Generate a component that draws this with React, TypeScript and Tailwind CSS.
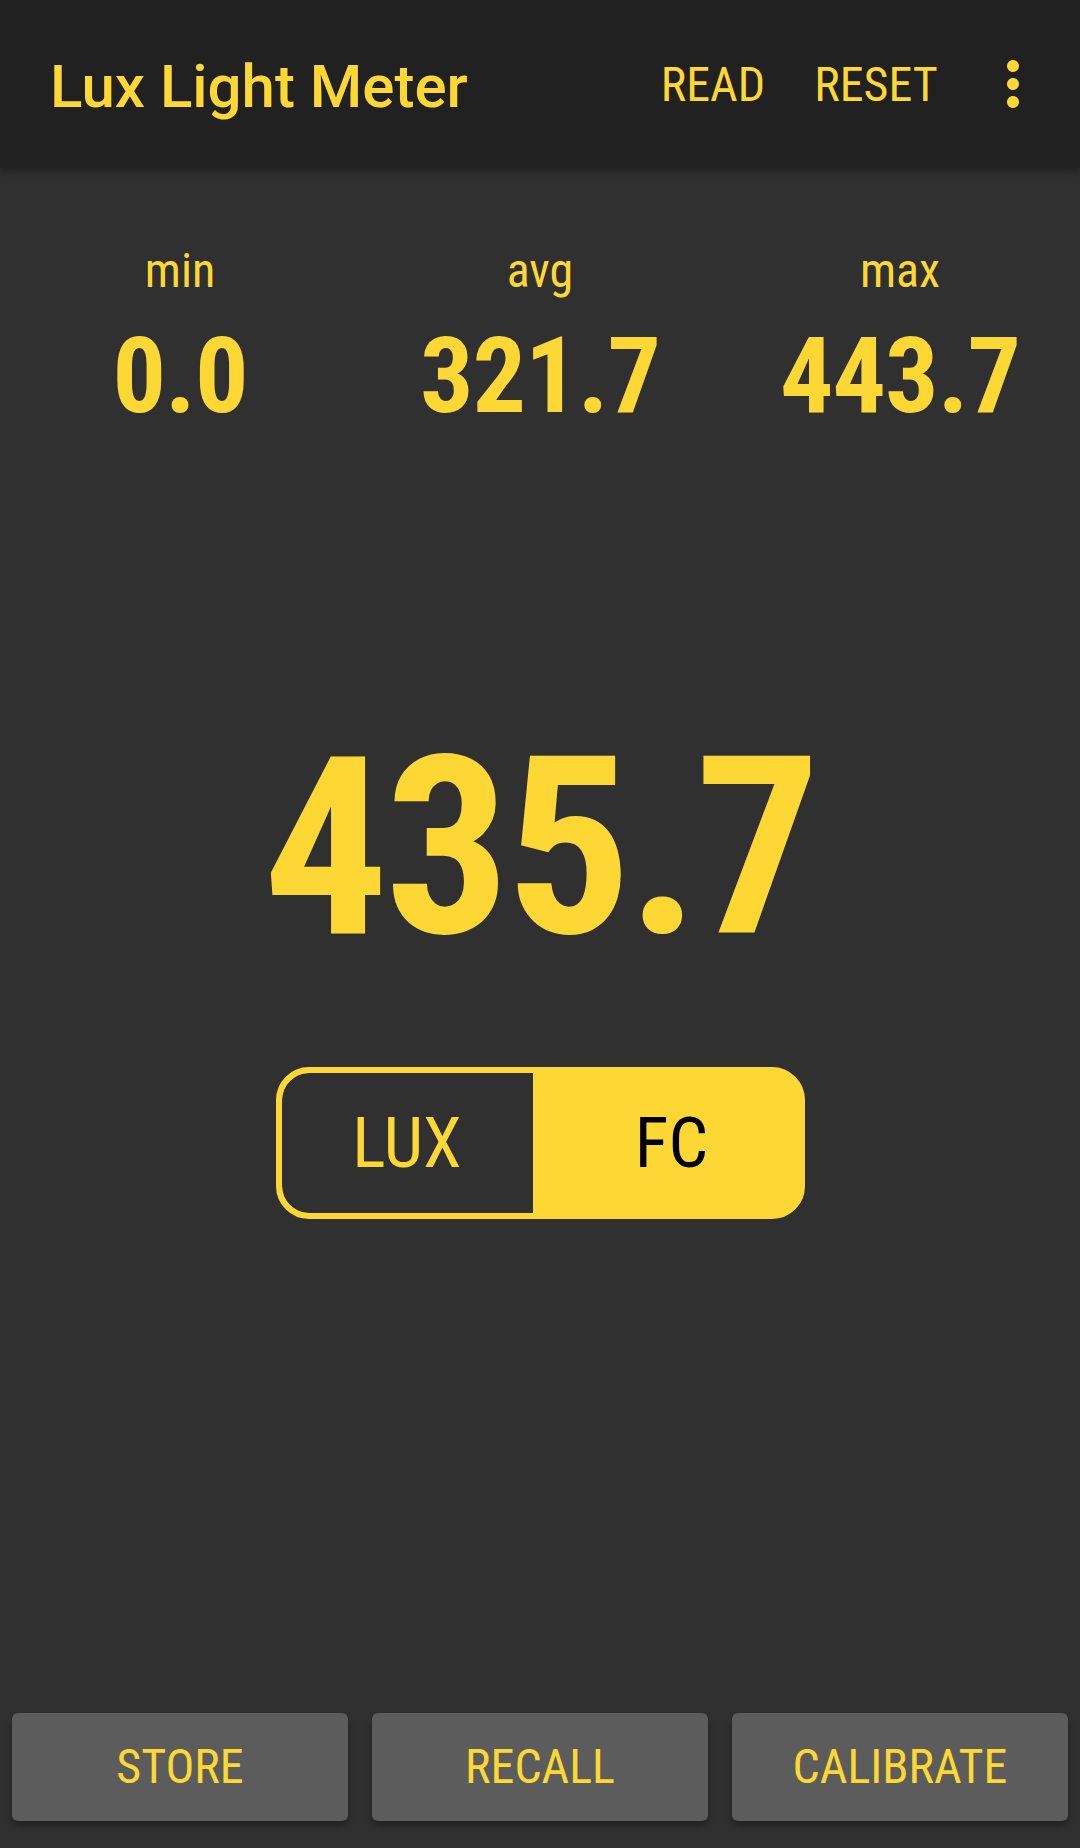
const YELLOW = "#fdd835";

const STATS = [
  { label: "min", value: "0.0" },
  { label: "avg", value: "321.7" },
  { label: "max", value: "443.7" },
];

const ACTIONS = ["STORE", "RECALL", "CALIBRATE"];

export default function App() {
  return (
    <div className="flex min-h-[1848px] flex-col bg-[#303030] font-['Roboto_Condensed',Roboto,sans-serif] text-[#fdd835]">
      <AppBar />

      <div className="mt-[79px] grid grid-cols-3">
        {STATS.map((s) => (
          <div key={s.label} className="flex flex-col items-center">
            <div className="text-[48px] leading-none">{s.label}</div>
            <div className="mt-[28px] text-[106px] font-bold leading-none tracking-[-1px]">{s.value}</div>
          </div>
        ))}
      </div>

      <div className="mt-[296px] text-center text-[248px] font-bold leading-none tracking-[-4px]">435.7</div>

      <div className="mt-[94px] flex justify-center">
        <UnitToggle />
      </div>

      <div className="mt-auto flex gap-[24px] px-[12px] pb-[27px]">
        {ACTIONS.map((a) => (
          <button
            key={a}
            className="flex h-[108px] flex-1 items-center justify-center rounded-[6px] bg-[#5c5c5d] text-[48px] leading-none text-[#fdd835] shadow-[0_4px_6px_rgba(0,0,0,0.35)]"
          >
            {a}
          </button>
        ))}
      </div>
    </div>
  );
}

function AppBar() {
  return (
    <div className="relative z-10 flex h-[168px] items-center bg-[#212121] shadow-[0_4px_8px_rgba(0,0,0,0.3)]">
      <div className="pl-[50px] pt-[5px] font-['Roboto',sans-serif] text-[60px] font-medium leading-none">
        Lux Light Meter
      </div>
      <div className="ml-auto flex items-center pr-[31px]">
        <div className="w-[140px] pt-[2px] text-center text-[48px] leading-none">READ</div>
        <div className="ml-[23px] w-[140px] pt-[2px] text-center text-[48px] leading-none">RESET</div>
        <svg className="ml-[31px] h-[72px] w-[72px]" viewBox="0 0 24 24" fill={YELLOW}>
          <path d="M12 8c1.1 0 2-.9 2-2s-.9-2-2-2-2 .9-2 2 .9 2 2 2zm0 2c-1.1 0-2 .9-2 2s.9 2 2 2 2-.9 2-2-.9-2-2-2zm0 6c-1.1 0-2 .9-2 2s.9 2 2 2 2-.9 2-2-.9-2-2-2z" />
        </svg>
      </div>
    </div>
  );
}

function UnitToggle() {
  return (
    <div className="flex h-[152px] w-[529px] overflow-hidden rounded-[33px] border-[6px] border-[#fdd835] bg-[#fdd835]">
      <div className="flex w-[251px] items-center justify-center rounded-l-[27px] bg-[#303030] text-[70px] leading-none text-[#fdd835]">
        LUX
      </div>
      <div className="flex flex-1 items-center justify-center pl-[12px] text-[70px] leading-none text-black">
        FC
      </div>
    </div>
  );
}
